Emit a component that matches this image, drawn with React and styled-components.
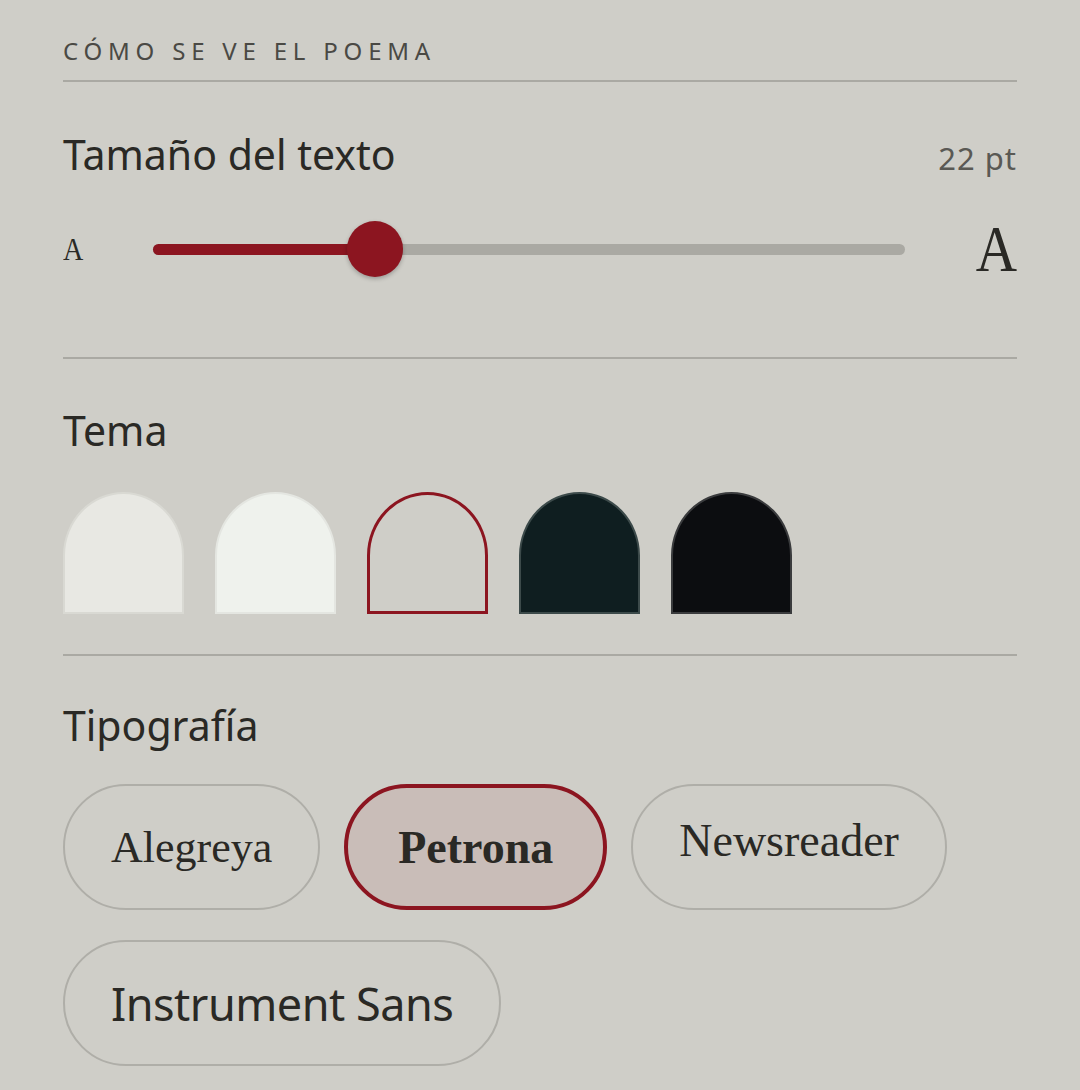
import React from 'react'
import styled, { createGlobalStyle } from 'styled-components'

const GlobalStyle = createGlobalStyle`
    html, body {
        margin: 0;
        padding: 0;
        background: #cfcec8;
    }
    body {
        font-family: "Noto Sans", "Open Sans", sans-serif;
        color: #2a2925;
    }
`

const Panel = styled.div`
    padding: 0 63px;
    width: 954px;
`

const SectionHeading = styled.h2`
    margin: 0;
    padding-top: 35px;
    padding-bottom: 13px;
    font-size: 24px;
    line-height: 32px;
    font-weight: 400;
    letter-spacing: 5.8px;
    color: #4a4944;
    border-bottom: 2px solid #aaa9a3;
`

const Group = styled.section`
    padding: ${({ $top }) => $top}px 0 ${({ $bottom }) => $bottom}px;
    border-bottom: ${({ $last }) => ($last ? 'none' : '2px solid #aaa9a3')};
`

const LabelRow = styled.div`
    display: flex;
    justify-content: space-between;
    align-items: baseline;
`

const Label = styled.div`
    font-size: 41px;
    line-height: 50px;
    color: #2a2925;
`

const Value = styled.div`
    font-size: 31px;
    line-height: 50px;
    letter-spacing: 1px;
    color: #5a5954;
`

const SliderRow = styled.div`
    display: flex;
    align-items: center;
    margin-top: 36px;
    height: 60px;
`

const SizeGlyph = styled.span`
    font-family: "Liberation Serif", "DejaVu Serif", serif;
    font-size: ${({ $size }) => $size}px;
    line-height: 1;
    color: #2a2925;
    width: ${({ $w }) => $w}px;
    flex: none;
    text-align: ${({ $align }) => $align};
    transform: scaleX(0.88);
    transform-origin: ${({ $align }) => $align};
`

const Track = styled.div`
    position: relative;
    flex: 1;
    height: 11px;
    border-radius: 6px;
    background: #aaa9a3;
    margin: 0 64px 0 66px;
`

const Fill = styled.div`
    height: 100%;
    border-radius: 6px;
    background: #8c1520;
`

const Thumb = styled.div`
    position: absolute;
    top: 50%;
    width: 56px;
    height: 56px;
    margin: -28px 0 0 -28px;
    border-radius: 50%;
    background: #8c1520;
    box-shadow: 0 2px 4px rgba(0, 0, 0, 0.25);
`

const Swatches = styled.div`
    display: flex;
    gap: 31px;
    margin-top: 37px;
`

const Swatch = styled.button`
    width: 121px;
    height: 122px;
    padding: 0;
    box-sizing: border-box;
    border-radius: 61px 61px 0 0 / 64px 64px 0 0;
    background: ${({ $bg }) => $bg};
    border: ${({ $active, $edge }) => ($active ? '3px solid #8c1520' : `2px solid ${$edge}`)};
    cursor: pointer;
`

const Chips = styled.div`
    display: flex;
    flex-wrap: wrap;
    gap: 30px 24px;
    margin-top: 34px;
`

const Chip = styled.button`
    height: 126px;
    box-sizing: border-box;
    padding: 0 ${({ $active }) => ($active ? 50 : 46)}px ${({ $lift }) => $lift || 0}px;
    border-radius: 63px;
    border: ${({ $active }) => ($active ? '4px solid #8c1520' : '2px solid #afaea8')};
    background: ${({ $active }) => ($active ? '#c9bdb8' : 'transparent')};
    font-family: ${({ $font }) => $font};
    font-size: ${({ $size }) => $size}px;
    font-weight: ${({ $active }) => ($active ? 700 : 400)};
    letter-spacing: ${({ $track }) => $track || 0}px;
    color: #2a2925;
    cursor: pointer;
`

const THEMES = [
    { bg: '#e8e8e3', edge: '#d9d9d3' },
    { bg: '#eff2ed', edge: '#e4e6e1' },
    { bg: 'transparent', edge: '#8c1520', active: true },
    { bg: '#0f1e20', edge: '#3c4a4a' },
    { bg: '#0c0d10', edge: '#3a3b3d' },
]

const FONTS = [
    { name: 'Alegreya', font: '"Liberation Serif", serif', size: 44 },
    { name: 'Petrona', font: '"Liberation Serif", serif', size: 46, active: true },
    { name: 'Newsreader', font: '"Liberation Serif", serif', size: 46, lift: 14 },
    { name: 'Instrument Sans', font: '"Noto Sans", sans-serif', size: 45, track: -0.5 },
]

export default function App() {
    const value = 0.295
    return (
        <>
            <GlobalStyle />
            <Panel>
                <SectionHeading>CÓMO SE VE EL POEMA</SectionHeading>

                <Group $top={47} $bottom={78}>
                    <LabelRow>
                        <Label>Tamaño del texto</Label>
                        <Value>22 pt</Value>
                    </LabelRow>
                    <SliderRow>
                        <SizeGlyph $size={32} $w={24} $align="left">A</SizeGlyph>
                        <Track>
                            <Fill style={{ width: `${value * 100}%` }} />
                            <Thumb style={{ left: `${value * 100}%` }} />
                        </Track>
                        <SizeGlyph $size={65} $w={48} $align="right">A</SizeGlyph>
                    </SliderRow>
                </Group>

                <Group $top={46} $bottom={40}>
                    <Label>Tema</Label>
                    <Swatches>
                        {THEMES.map((t, i) => (
                            <Swatch key={i} $bg={t.bg} $edge={t.edge} $active={t.active} />
                        ))}
                    </Swatches>
                </Group>

                <Group $top={44} $bottom={24} $last>
                    <Label>Tipografía</Label>
                    <Chips>
                        {FONTS.map(f => (
                            <Chip
                                key={f.name}
                                $font={f.font}
                                $size={f.size}
                                $active={f.active}
                                $lift={f.lift}
                                $track={f.track}
                            >
                                {f.name}
                            </Chip>
                        ))}
                    </Chips>
                </Group>
            </Panel>
        </>
    )
}
